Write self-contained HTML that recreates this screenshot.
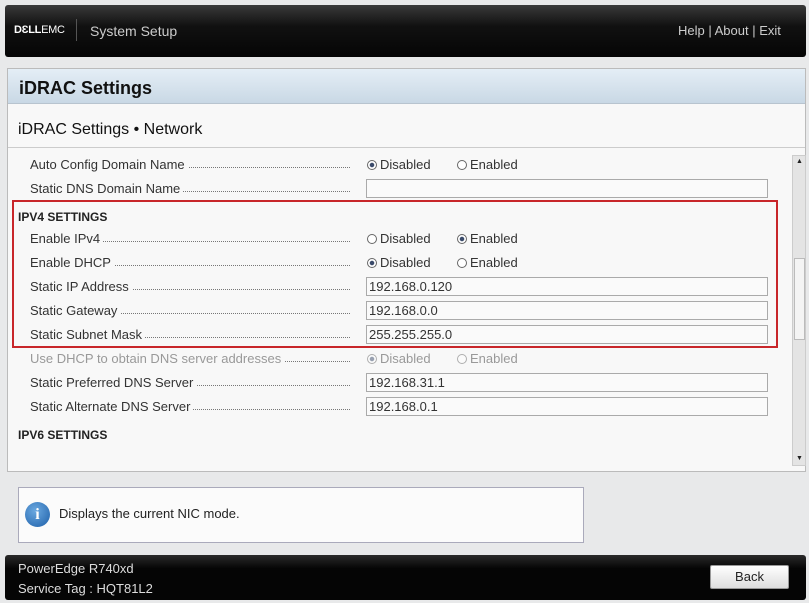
<!DOCTYPE html><html><head><style>
*{box-sizing:border-box;margin:0;padding:0}
body{width:809px;height:603px;background:#e8e9ea;font-family:"Liberation Sans",sans-serif;position:relative;overflow:hidden;color:#222}
.a{position:absolute}
.top{left:5px;top:5px;width:801px;height:52px;background:linear-gradient(#3a3a3a,#111 40%,#050505);border-radius:3px}
.panel{left:7px;top:68px;width:799px;height:404px;background:#f8f8f8;border:1px solid #bbb}
.hdr{left:8px;top:69px;width:797px;height:35px;background:linear-gradient(#e4eef6,#c9d8e5);border-bottom:1px solid #b8c4cf;font-weight:bold;font-size:18px;padding:9px 0 0 11px;color:#111}
.lbl{left:30px;font-size:13px;color:#333;width:320px;white-space:nowrap;overflow:hidden}
.lbl span{background:#f8f8f8;padding-right:3px}
.lbl:after{content:"";position:absolute;left:0;right:0;bottom:4px;border-bottom:1px dotted #777;z-index:-1}
.lbl{z-index:1}
.sec{left:18px;font-size:12px;font-weight:bold;color:#222}
.r{font-size:13px;color:#333}
.rd{display:inline-block;width:10px;height:10px;border:1px solid #666;border-radius:50%;vertical-align:-1px;margin-right:3px;background:#fff}
.rd.on{background:radial-gradient(#3a4a6a 35%,#fff 45%)}
.inp{left:366px;width:402px;height:19px;border:1px solid #aaa;background:#fafafa;font-size:13px;padding:1px 2px;color:#333}
.dis{color:#999}
</style></head><body>
<div class="a top"></div>
<div class="a" style="left:14px;top:24px;color:#fff;font-size:11px;font-weight:bold;letter-spacing:-.3px">D<span>Ɛ</span>LL<span style="font-weight:normal">EMC</span></div>
<div class="a" style="left:76px;top:19px;width:1px;height:22px;background:#555"></div>
<div class="a" style="left:90px;top:23px;color:#ccc;font-size:14px">System Setup</div>
<div class="a" style="left:678px;top:23px;color:#ccc;font-size:13px">Help | About | Exit</div>
<div class="a panel"></div>
<div class="a hdr">iDRAC Settings</div>
<div class="a" style="left:18px;top:121px;font-size:16px;color:#111">iDRAC Settings • Network</div>
<div class="a" style="left:8px;top:147px;width:797px;height:1px;background:#ccc"></div>

<div class="a lbl" style="top:157px"><span>Auto Config Domain Name</span></div>
<div class="a r" style="left:367px;top:157px"><i class="rd on"></i>Disabled</div>
<div class="a r" style="left:457px;top:157px"><i class="rd"></i>Enabled</div>
<div class="a lbl" style="top:181px"><span>Static DNS Domain Name</span></div>
<div class="a inp" style="top:179px"></div>
<div class="a sec" style="top:210px">IPV4 SETTINGS</div>
<div class="a lbl" style="top:231px"><span>Enable IPv4</span></div>
<div class="a r" style="left:367px;top:231px"><i class="rd"></i>Disabled</div>
<div class="a r" style="left:457px;top:231px"><i class="rd on"></i>Enabled</div>
<div class="a lbl" style="top:255px"><span>Enable DHCP</span></div>
<div class="a r" style="left:367px;top:255px"><i class="rd on"></i>Disabled</div>
<div class="a r" style="left:457px;top:255px"><i class="rd"></i>Enabled</div>
<div class="a lbl" style="top:279px"><span>Static IP Address</span></div>
<div class="a inp" style="top:277px">192.168.0.120</div>
<div class="a lbl" style="top:303px"><span>Static Gateway</span></div>
<div class="a inp" style="top:301px">192.168.0.0</div>
<div class="a lbl" style="top:327px"><span>Static Subnet Mask</span></div>
<div class="a inp" style="top:325px">255.255.255.0</div>
<div class="a lbl dis" style="top:351px;color:#999"><span>Use DHCP to obtain DNS server addresses</span></div>
<div class="a r dis" style="left:367px;top:351px"><i class="rd on" style="opacity:.5"></i>Disabled</div>
<div class="a r dis" style="left:457px;top:351px"><i class="rd" style="opacity:.5"></i>Enabled</div>
<div class="a lbl" style="top:375px"><span>Static Preferred DNS Server</span></div>
<div class="a inp" style="top:373px">192.168.31.1</div>
<div class="a lbl" style="top:399px"><span>Static Alternate DNS Server</span></div>
<div class="a inp" style="top:397px">192.168.0.1</div>
<div class="a sec" style="top:428px">IPV6 SETTINGS</div>

<div class="a" style="left:12px;top:200px;width:766px;height:148px;border:2px solid #c8262a"></div>

<div class="a" style="left:792px;top:155px;width:14px;height:311px;background:#e4e4e4;border:1px solid #ccc"></div>
<div class="a" style="left:794px;top:258px;width:11px;height:82px;background:#f4f4f4;border:1px solid #bbb"></div>
<div class="a" style="left:796px;top:158px;font-size:7px">▲</div>
<div class="a" style="left:796px;top:455px;font-size:7px">▼</div>

<div class="a" style="left:18px;top:487px;width:566px;height:56px;background:#fbfbfb;border:1px solid #aab"></div>
<div class="a" style="left:25px;top:502px;width:25px;height:25px;border-radius:50%;background:radial-gradient(circle at 40% 35%,#6aa8e0,#1d5fa8);color:#fff;font-weight:bold;font-size:16px;text-align:center;line-height:25px;font-family:'Liberation Serif',serif">i</div>
<div class="a" style="left:59px;top:506px;font-size:13px;color:#222">Displays the current NIC mode.</div>

<div class="a" style="left:5px;top:555px;width:801px;height:45px;background:linear-gradient(#2a2a2a,#050505 30%);border-radius:3px"></div>
<div class="a" style="left:18px;top:561px;color:#ddd;font-size:13px">PowerEdge R740xd</div>
<div class="a" style="left:18px;top:581px;color:#ddd;font-size:13px">Service Tag : HQT81L2</div>
<div class="a" style="left:710px;top:565px;width:79px;height:24px;background:linear-gradient(#fff,#ddd);border:1px solid #999;border-radius:2px;text-align:center;font-size:13px;line-height:22px;color:#222">Back</div>
</body></html>
